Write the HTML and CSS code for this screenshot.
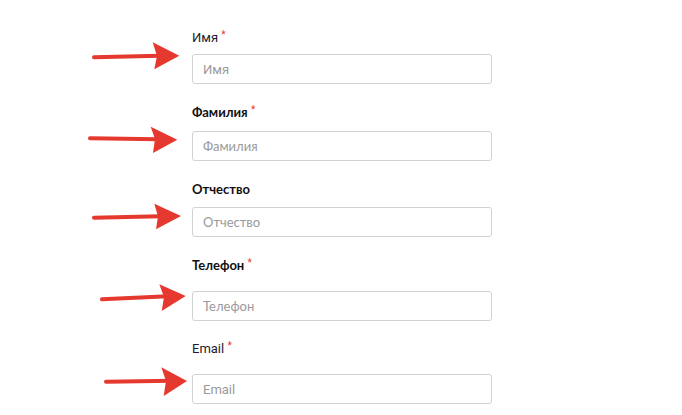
FILE: index.html
```html
<!DOCTYPE html>
<html lang="ru">
<head>
<meta charset="utf-8">
<title>Форма</title>
<link rel="stylesheet" href="styles.css">
</head>
<body>
<form class="form">
  <div class="field field--first">
    <label class="label label--regular" for="f1">Имя <span class="req">*</span></label>
    <div class="control gap-8">
      <svg class="arrow" width="100" height="32" viewBox="0 0 100 32" style="left:-100px;top:-12px">
        <line x1="2" y1="15.3" x2="68" y2="13.8" stroke="#e5392f" stroke-width="4" stroke-linecap="round"/>
        <polygon points="60.7,0.3 87.3,13.7 62.3,27.3 65,14" fill="#e5392f"/>
      </svg>
      <input id="f1" class="input input--roboto" placeholder="Имя">
    </div>
  </div>
  <div class="field">
    <label class="label" for="f2">Фамилия <span class="req">*</span></label>
    <div class="control gap-11">
      <svg class="arrow" width="100" height="32" viewBox="0 0 100 32" style="left:-104px;top:-5px">
        <line x1="2" y1="12.3" x2="70" y2="13.3" stroke="#e5392f" stroke-width="4" stroke-linecap="round"/>
        <polygon points="62.7,0.7 89.3,13.7 65,27 67,13" fill="#e5392f"/>
      </svg>
      <input id="f2" class="input" placeholder="Фамилия">
    </div>
  </div>
  <div class="field">
    <label class="label" for="f3">Отчество</label>
    <div class="control gap-10">
      <svg class="arrow" width="100" height="32" viewBox="0 0 100 32" style="left:-102px;top:-6px">
        <line x1="4" y1="16.7" x2="70" y2="15.3" stroke="#e5392f" stroke-width="4" stroke-linecap="round"/>
        <polygon points="64.3,2.7 91,15 66,28.3 68,15.5" fill="#e5392f"/>
      </svg>
      <input id="f3" class="input" placeholder="Отчество">
    </div>
  </div>
  <div class="field">
    <label class="label" for="f4">Телефон <span class="req">*</span></label>
    <div class="control gap-18">
      <svg class="arrow" width="100" height="32" viewBox="0 0 100 32" style="left:-94px;top:-8px">
        <line x1="4" y1="16.3" x2="70" y2="13.3" stroke="#e5392f" stroke-width="4" stroke-linecap="round"/>
        <polygon points="61.3,1.3 87.7,13 63.7,28 66,14" fill="#e5392f"/>
      </svg>
      <input id="f4" class="input" placeholder="Телефон">
    </div>
  </div>
  <div class="field">
    <label class="label label--regular" for="f5">Email <span class="req">*</span></label>
    <div class="control gap-17">
      <svg class="arrow" width="100" height="32" viewBox="0 0 100 32" style="left:-90px;top:-9px">
        <line x1="4" y1="16.7" x2="70" y2="15.8" stroke="#e5392f" stroke-width="4" stroke-linecap="round"/>
        <polygon points="59.3,2.3 85,16 61.7,31 64,16" fill="#e5392f"/>
      </svg>
      <input id="f5" class="input input--roboto" placeholder="Email">
    </div>
  </div>
</form>
</body>
</html>
```
FILE: styles.css
```css
html, body {
  margin: 0;
  padding: 0;
  background: #ffffff;
}

body {
  font-family: "Lato", "Liberation Sans", sans-serif;
  color: #1c1c1c;
  width: 682px;
  height: 415px;
  overflow: hidden;
}

.form {
  display: flex;
  flex-direction: column;
  gap: 20px;
  padding: 30px 0 0 192px;
}

.field {
  display: flex;
  flex-direction: column;
}

.label {
  display: block;
  height: 16px;
  font-size: 13px;
  line-height: 16px;
  font-weight: 700;
  color: #111111;
}

.label--regular {
  font-family: "Roboto", "Liberation Sans", sans-serif;
  font-weight: 400;
  color: #1d1b2e;
}

.req {
  color: #e5392f;
  font-size: 10px;
  line-height: 0;
  font-weight: 400;
  position: relative;
  top: -4px;
  font-family: "Roboto", sans-serif;
}

.control {
  position: relative;
}

.gap-8 { margin-top: 8px; }
.gap-10 { margin-top: 10px; }
.gap-11 { margin-top: 11px; }
.gap-17 { margin-top: 17px; }
.gap-18 { margin-top: 18px; }

.arrow {
  position: absolute;
  overflow: visible;
}

.input {
  box-sizing: border-box;
  display: block;
  width: 300px;
  height: 30px;
  margin: 0;
  padding: 0 10px;
  border: 1px solid #d2d2d2;
  border-radius: 3px;
  background: #ffffff;
  font-family: "Lato", "Liberation Sans", sans-serif;
  font-size: 13px;
  color: #333333;
  outline: none;
}

.input::placeholder {
  color: #9a9a9a;
  opacity: 1;
}

.input--roboto {
  font-family: "Roboto", "Liberation Sans", sans-serif;
}
```
